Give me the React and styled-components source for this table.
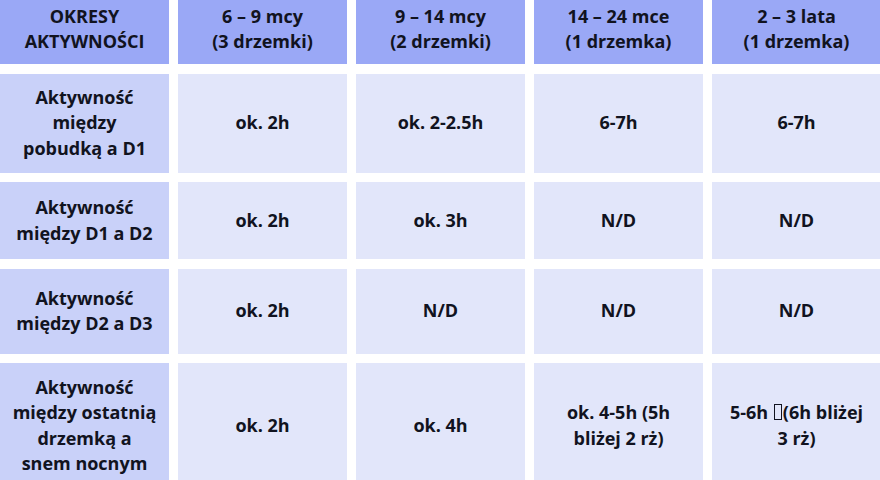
import React from "react";
import styled, { createGlobalStyle } from "styled-components";

const Global = createGlobalStyle`
  html, body { margin: 0; padding: 0; background: #ffffff; }
  body { width: 880px; height: 480px; overflow: hidden; }
`;

const Table = styled.div`
  display: grid;
  grid-template-columns: repeat(5, 169px);
  grid-template-rows: 64px 99px 77px 85px 125px;
  column-gap: 9px;
  row-gap: 9.5px;
  font-family: "Open Sans", "DejaVu Sans", sans-serif;
  font-weight: 700;
  font-size: 18px;
  line-height: 25.5px;
  color: #111320;
`;

const Cell = styled.div`
  display: flex;
  align-items: center;
  justify-content: center;
  text-align: center;
  padding: ${(p) => (p.$kind === "head" ? "0 4px 6px" : "0 4px")};
  background: ${(p) =>
    p.$kind === "head" ? "#9aa8f6" : p.$kind === "label" ? "#c9d1f9" : "#e2e6fa"};
`;

const Tofu = styled.span`
  display: inline-block;
  width: 6px;
  height: 14px;
  border: 1px solid #111320;
  margin: 0 1px 0 1px;
  vertical-align: -1px;
`;

const lines = (arr) =>
  arr.map((t, i) => (
    <React.Fragment key={i}>
      {i > 0 && <br />}
      {t}
    </React.Fragment>
  ));

const header = [
  ["OKRESY", "AKTYWNOŚCI"],
  ["6 – 9 mcy", "(3 drzemki)"],
  ["9 – 14 mcy", "(2 drzemki)"],
  ["14 – 24 mce", "(1 drzemka)"],
  ["2 – 3 lata", "(1 drzemka)"],
];

const rows = [
  [["Aktywność", "między", "pobudką a D1"], ["ok. 2h"], ["ok. 2-2.5h"], ["6-7h"], ["6-7h"]],
  [["Aktywność", "między D1 a D2"], ["ok. 2h"], ["ok. 3h"], ["N/D"], ["N/D"]],
  [["Aktywność", "między D2 a D3"], ["ok. 2h"], ["N/D"], ["N/D"], ["N/D"]],
  [
    ["Aktywność", "między ostatnią", "drzemką a", "snem nocnym"],
    ["ok. 2h"],
    ["ok. 4h"],
    ["ok. 4-5h (5h", "bliżej 2 rż)"],
    [
      <>
        5-6h <Tofu />(6h bliżej
      </>,
      "3 rż)",
    ],
  ],
];

export default function App() {
  return (
    <>
      <Global />
      <Table>
        {header.map((h, i) => (
          <Cell key={"h" + i} $kind="head">
            <span>{lines(h)}</span>
          </Cell>
        ))}
        {rows.map((r, ri) =>
          r.map((c, ci) => (
            <Cell key={ri + "-" + ci} $kind={ci === 0 ? "label" : "body"}>
              <span>{lines(c)}</span>
            </Cell>
          ))
        )}
      </Table>
    </>
  );
}
